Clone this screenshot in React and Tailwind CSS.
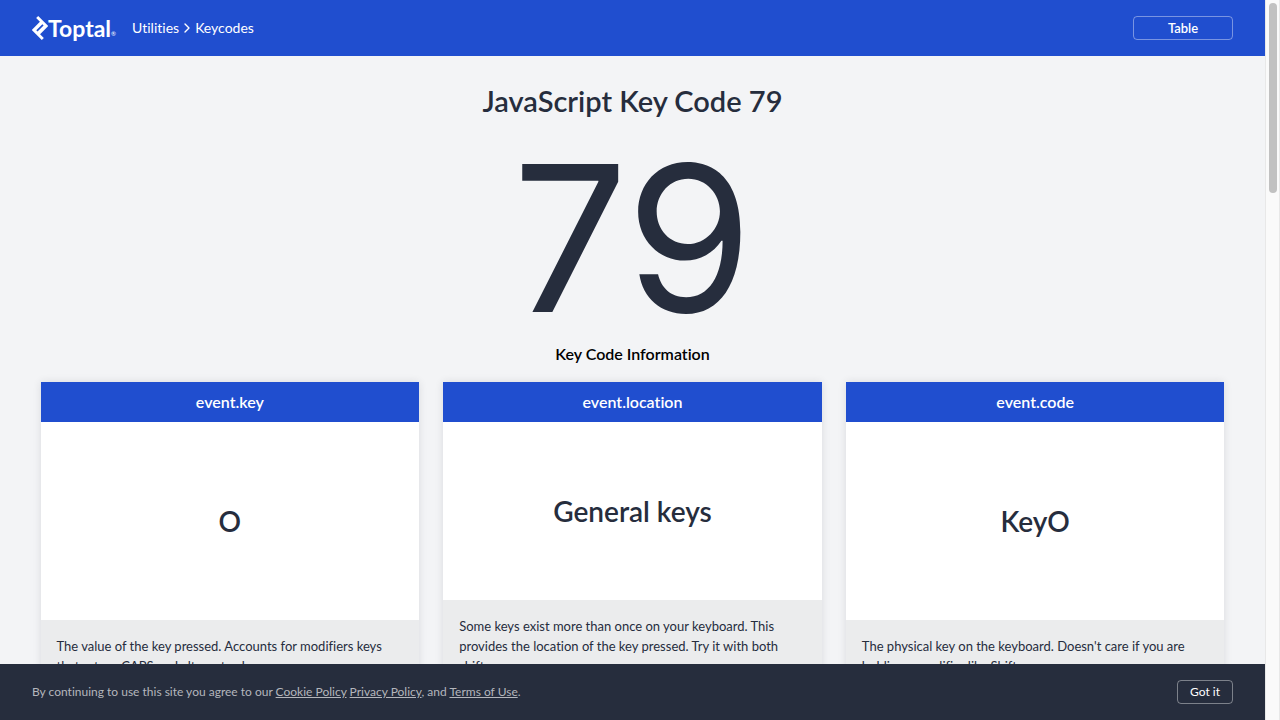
import { ChevronRight } from 'lucide-react';
import { SiToptal } from 'react-icons/si';

const cards = [
  {
    title: 'event.key',
    value: 'O',
    text: 'The value of the key pressed. Accounts for modifiers keys that return CAPS and alternate chars.',
  },
  {
    title: 'event.location',
    value: 'General keys',
    text: 'Some keys exist more than once on your keyboard. This provides the location of the key pressed. Try it with both shifts.',
  },
  {
    title: 'event.code',
    value: 'KeyO',
    text: "The physical key on the keyboard. Doesn't care if you are holding a modifier like Shift.",
  },
];

function Logo() {
  return (
    <a href="#home" aria-label="Toptal" className="flex items-center text-white">
      <SiToptal viewBox="4 0 16 24" className="h-6 w-4" aria-hidden="true" />
      <span className="text-[23px] leading-6 font-bold">Toptal</span>
      <span className="self-end text-[6px] leading-3">®</span>
    </a>
  );
}

function Card({ title, value, text }) {
  return (
    <article className="flex flex-col bg-white shadow-[0_0_8px_rgba(38,45,61,0.12)]">
      <h3 className="flex h-10 items-center justify-center bg-[#204ecf] text-base font-semibold text-white">
        {title}
      </h3>
      <div className="flex flex-1 items-center justify-center text-[28px] font-semibold">{value}</div>
      <p className="bg-[#ebeced] p-4 text-[13px] leading-5">{text}</p>
    </article>
  );
}

export default function App() {
  return (
    <div className="flex h-screen bg-[#f3f4f6] font-['Lato',sans-serif] text-[#262d3d] [font-variant-ligatures:none]">
      <div className="flex min-w-0 flex-1 flex-col">
        <header className="flex h-14 shrink-0 items-center justify-between bg-[#204ecf] px-8 text-white">
          <div className="flex items-center gap-4">
            <Logo />
            <nav aria-label="Breadcrumb" className="flex items-center text-sm">
              <a href="#utilities">Utilities</a>
              <ChevronRight className="h-4 w-4" strokeWidth={2} aria-hidden="true" />
              <a href="#keycodes">Keycodes</a>
            </nav>
          </div>
          <button type="button" className="h-6 w-25 rounded border border-white/40 text-[13px] leading-5 font-semibold">
            Table
          </button>
        </header>
        <main className="flex min-h-0 flex-1 flex-col items-center overflow-hidden">
          <h1 className="mt-7 shrink-0 text-[29px] leading-[34px] font-semibold">JavaScript Key Code 79</h1>
          <div className="mt-4 shrink-0 font-['Inter',sans-serif] text-[204px] leading-[208px]">79</div>
          <h2 className="mt-1 shrink-0 text-base leading-4 font-semibold text-black">Key Code Information</h2>
          <section className="mt-5 grid min-h-[310px] w-full max-w-[1184px] shrink-0 grid-cols-3 gap-6">
            {cards.map((card) => (
              <Card key={card.title} {...card} />
            ))}
          </section>
        </main>
        <footer className="relative flex h-14 shrink-0 items-center justify-between bg-[#262d3d] px-8 text-white">
          <p className="text-xs text-[#b4b6bc]">
            By continuing to use this site you agree to our{' '}
            <a href="#cookies" className="underline">Cookie Policy</a>{' '}
            <a href="#privacy" className="underline">Privacy Policy</a>, and{' '}
            <a href="#terms" className="underline">Terms of Use</a>.
          </p>
          <button type="button" className="h-6 w-14 rounded border border-white/40 text-xs">
            Got it
          </button>
        </footer>
      </div>
      <div className="flex w-[15px] shrink-0 justify-center border-x border-[#e8e8e8] bg-[#fafafa] pt-[3px]" aria-hidden="true">
        <div className="h-[190px] w-2 rounded-full bg-[#c1c1c1]" />
      </div>
    </div>
  );
}
